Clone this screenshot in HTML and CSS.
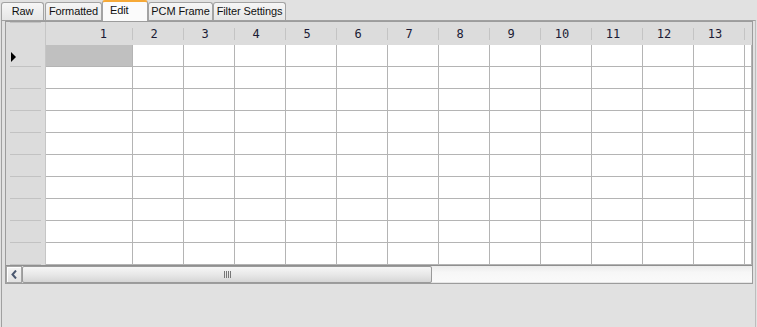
FILE: index.html
```html
<!DOCTYPE html>
<html lang="en">
<head>
    <meta charset="UTF-8">
    <title>Edit</title>
    <link rel="stylesheet" href="styles.css">
</head>
<body>

<div class="tabs">
    <div class="tab tab-raw">Raw</div>
    <div class="tab tab-fmt">Formatted</div>
    <div class="tab tab-edit active">Edit</div>
    <div class="tab tab-pcm">PCM Frame</div>
    <div class="tab tab-filter">Filter Settings</div>
</div>

<div class="panel">
    <div class="grid">
        <div class="row head">
            <div class="rh"></div>
            <div class="hc first">1</div>
            <div class="hc">2</div>
            <div class="hc">3</div>
            <div class="hc">4</div>
            <div class="hc">5</div>
            <div class="hc">6</div>
            <div class="hc">7</div>
            <div class="hc">8</div>
            <div class="hc">9</div>
            <div class="hc">10</div>
            <div class="hc">11</div>
            <div class="hc">12</div>
            <div class="hc">13</div>
            <div class="hc tail"></div>
        </div>
        <div id="rows"></div>
        <div class="hscroll">
            <div class="sb-btn">
                <svg width="7" height="9" viewBox="0 0 7 9"><path d="M5 0.5 L1.5 4.5 L5 8.5" fill="none" stroke="#4b5870" stroke-width="2"/></svg>
            </div>
            <div class="sb-thumb"><span class="grip"></span></div>
            <div class="sb-track"></div>
        </div>
    </div>
</div>

<script>
    const rows = document.getElementById('rows');
    for (let r = 0; r < 10; r++) {
        let html = '<div class="row">';
        html += r === 0 ? '<div class="rh"><span class="mark"><i class="arrow"></i></span></div>' : '<div class="rh"><span class="mark"></span></div>';
        html += `<div class="c first${r === 0 ? ' sel' : ''}"></div>`;
        for (let c = 0; c < 12; c++) {
            html += '<div class="c"></div>';
        }
        html += '<div class="c tail"></div></div>';
        rows.innerHTML += html;
    }
</script>

</body>
</html>
```

FILE: styles.css
```css
body {
    margin: 0;
    background: #e1e1e1;
    font-family: 'Liberation Sans', Arial, sans-serif;
    font-size: 11px;
    color: #000;
    overflow: hidden;
}

.tabs {
    display: flex;
    align-items: flex-end;
    height: 20px;
    padding-left: 1px;
}

.tab {
    box-sizing: border-box;
    height: 18px;
    line-height: 17px;
    text-align: center;
    border: 1px solid #a3a3a3;
    border-bottom: none;
    border-radius: 3px 3px 0 0;
    background: linear-gradient(#f6f6f6, #e6e6e6);
    letter-spacing: -0.1px;
    color: #111;
}

.tab-raw { width: 43px; }
.tab-fmt { width: 57px; margin-left: 1px; }
.tab-edit { width: 46px; }
.tab-pcm { width: 65px; }
.tab-filter { width: 73px; }

.tab.active {
    height: 21px;
    margin-bottom: -1px;
    line-height: 16px;
    border-top: 2px solid #f6a937;
    border-color: #a3a3a3;
    border-top-color: #f6a937;
    background: #fbfbfb;
    text-align: left;
    padding-left: 7px;
    position: relative;
    z-index: 1;
}

.panel {
    box-sizing: border-box;
    margin-left: 1px;
    width: 755px;
    height: 307px;
    border: 1px solid #a0a0a0;
    border-bottom: none;
    border-right-color: #bdbdbd;
}

.grid {
    width: 748px;
    box-sizing: border-box;
    margin-left: 3px;
    border: 1px solid #9c9c9c;
    overflow: hidden;
}

.row {
    display: flex;
    height: 22px;
}

.row.head {
    height: 23px;
}

.rh {
    flex: none;
    width: 40px;
    box-sizing: border-box;
    padding: 0 4px;
    background: #dcdcdc;
    border-right: 1px solid #c6c6c6;
    display: flex;
    flex-direction: column;
}

.mark {
    flex: 1;
    display: flex;
    align-items: center;
}

.rh::after {
    content: '';
    height: 1px;
    background: #c2c2c2;
}

.arrow {
    display: block;
    margin-left: 1px;
    margin-top: 2px;
    width: 0;
    height: 0;
    border-left: 5px solid #000;
    border-top: 5px solid transparent;
    border-bottom: 5px solid transparent;
}

.hc {
    flex: none;
    width: 51px;
    box-sizing: border-box;
    padding-right: 9px;
    background: #dcdcdc linear-gradient(#c4c4c4, #c4c4c4) right center / 1px 12px no-repeat;
    font-family: 'DejaVu Sans Mono', monospace;
    font-size: 12px;
    color: #1b1b35;
    display: flex;
    align-items: center;
    justify-content: center;
}

.hc.first {
    width: 87px;
    justify-content: flex-end;
    padding-right: 26px;
}

.hc.tail,
.c.tail {
    width: 7px;
    flex: none;
}

.c {
    flex: none;
    width: 51px;
    box-sizing: border-box;
    background: #fff;
    border-right: 1px solid #b4b4b4;
    border-bottom: 1px solid #b4b4b4;
}

.c.first {
    width: 87px;
}

.c.sel {
    background: #c0c0c0;
}

.hscroll {
    display: flex;
    height: 18px;
    border-top: 1px solid #8f8f8f;
    box-sizing: border-box;
}

.sb-btn {
    flex: none;
    width: 16px;
    box-sizing: border-box;
    border: 1px solid #a5a5a5;
    background: linear-gradient(#f4f4f4, #e2e2e2);
    box-shadow: inset 1px 1px 0 #fff;
    display: flex;
    align-items: center;
    justify-content: center;
}

.sb-thumb {
    flex: none;
    width: 410px;
    box-sizing: border-box;
    border: 1px solid #9a9a9a;
    border-radius: 2px;
    background: linear-gradient(#f6f6f6, #e8e8e8 50%, #d6d6d6);
    display: flex;
    align-items: center;
    justify-content: center;
}

.grip {
    width: 7px;
    height: 7px;
    background: repeating-linear-gradient(to right, #777 0 1px, transparent 1px 2px);
}

.sb-track {
    flex: 1;
    background: linear-gradient(#ececec, #f7f7f7 40%, #fafafa);
    border-bottom: 1px solid #e6e6e6;
}
```
